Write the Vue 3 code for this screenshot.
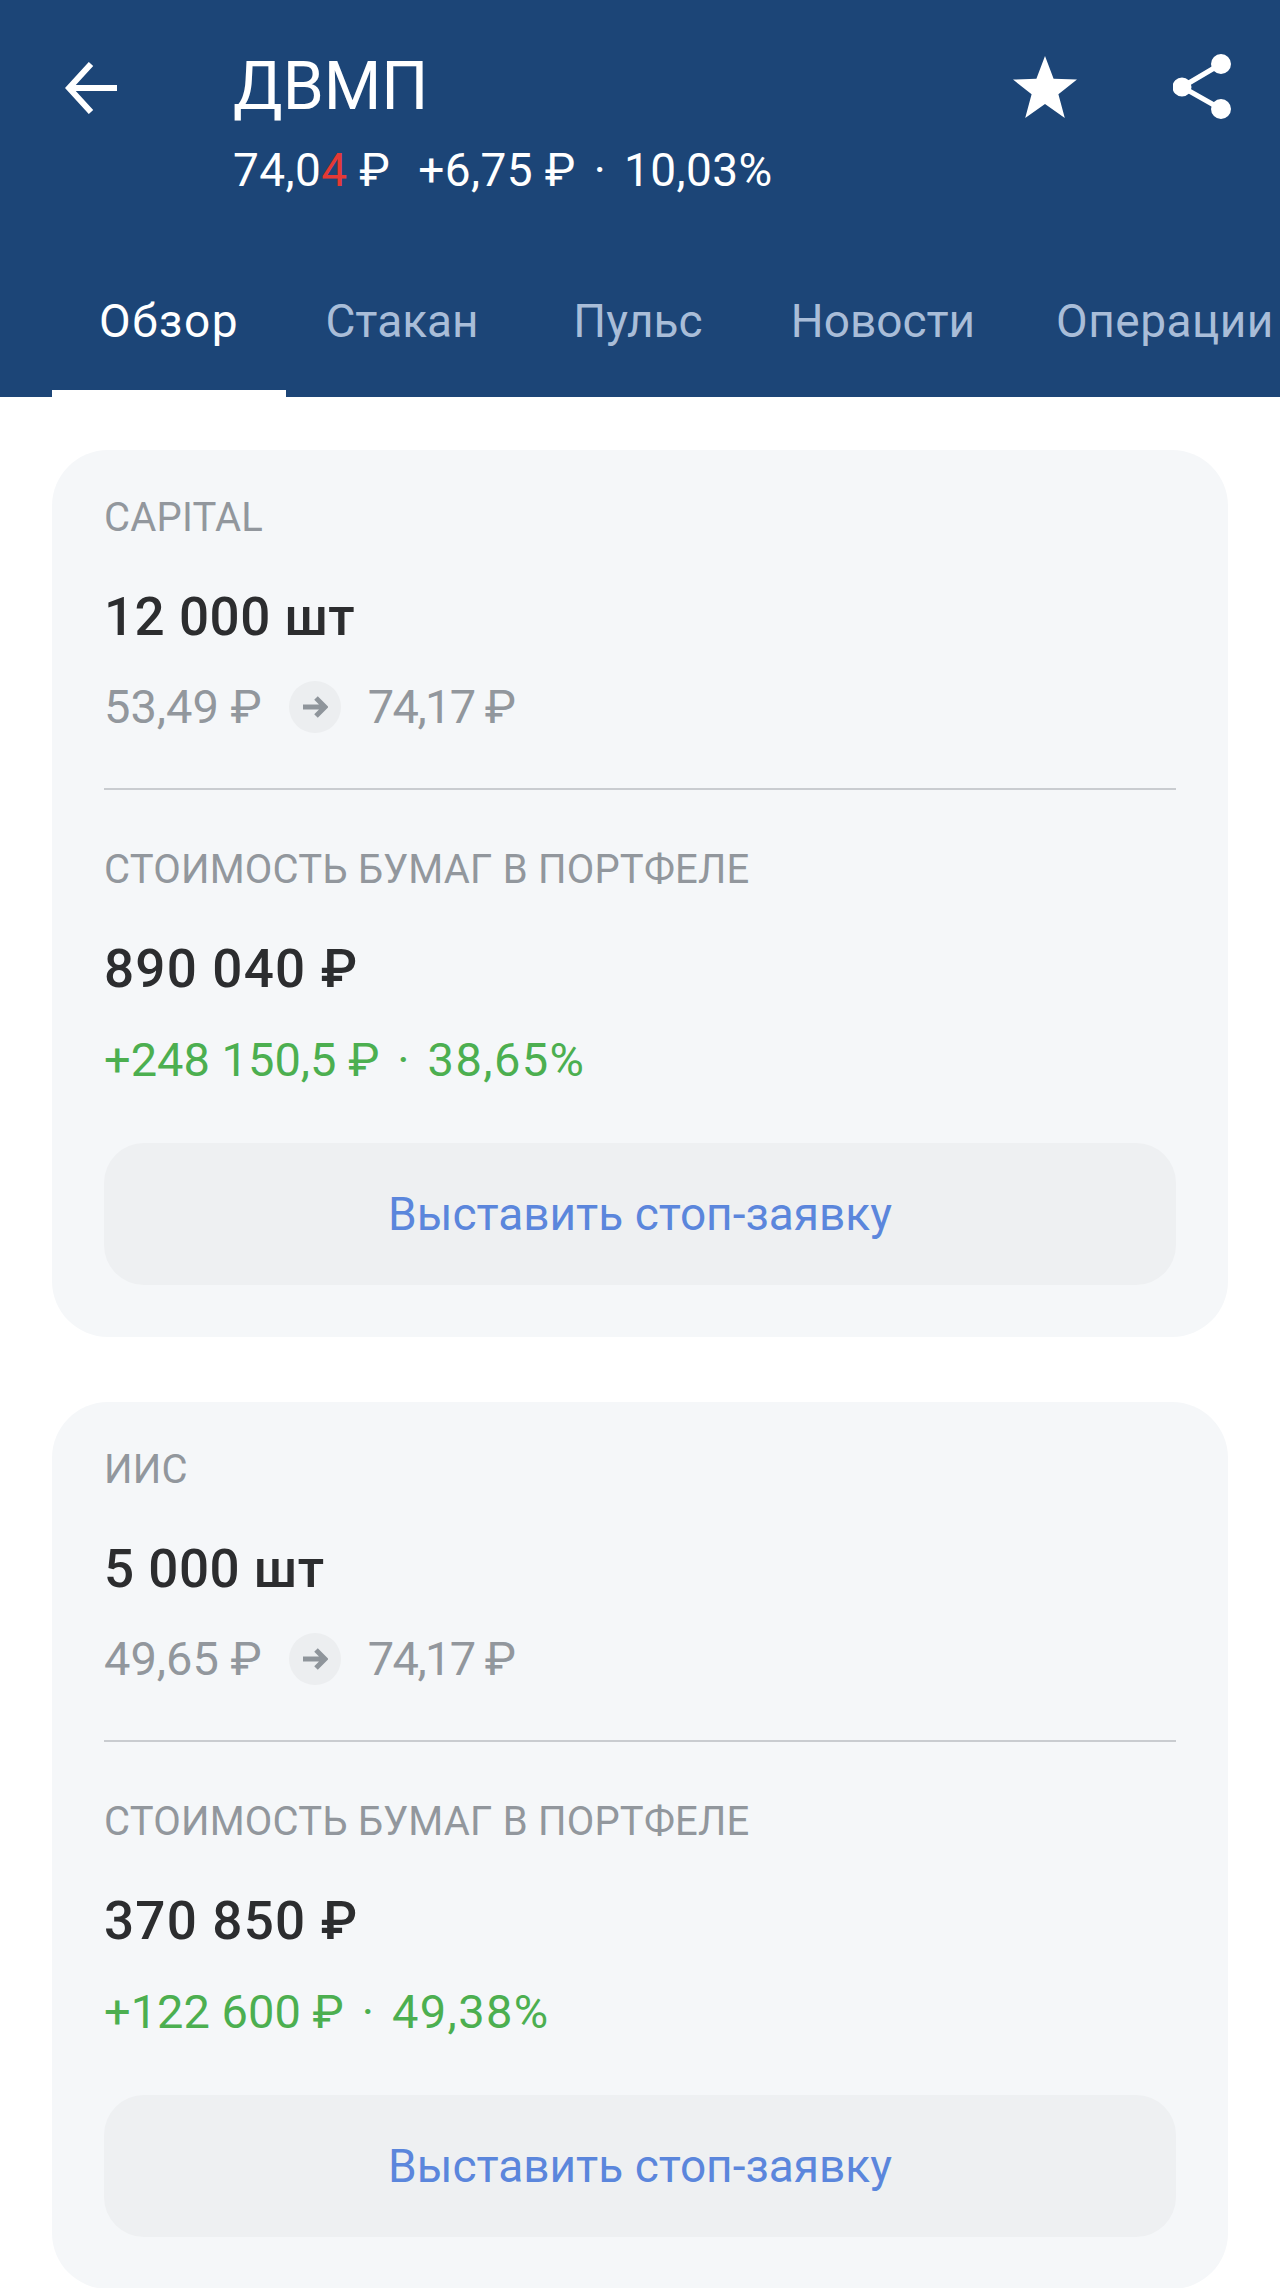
<script setup>
const tabs = ['Обзор', 'Стакан', 'Пульс', 'Новости', 'Операции'];
const positions = [
  { account: 'CAPITAL', qty: '12 000 шт', from: '53,49 ₽', to: '74,17 ₽', value: '890 040 ₽', gain: '+248 150,5 ₽', pct: '38,65%' },
  { account: 'ИИС', qty: '5 000 шт', from: '49,65 ₽', to: '74,17 ₽', value: '370 850 ₽', gain: '+122 600 ₽', pct: '49,38%' },
];
</script>

<template>
  <div class="page">
    <header class="header">
      <div class="top">
        <svg class="back" viewBox="0 0 52 52" width="52" height="52" fill="none" stroke="#fff" stroke-width="6">
          <path d="M26 2 4 26l22 24M4 26h48" />
        </svg>
        <div class="titles">
          <div class="title">ДВМП</div>
          <div class="quote">
            <span>74,0<i>4</i> ₽</span>
            <span class="change">+6,75 ₽</span>
            <span class="dot">·</span>
            <span>10,03%</span>
          </div>
        </div>
        <svg class="star" viewBox="0 0 64 62" width="64" height="62" fill="#fff">
          <path d="M32 0l8.6 22.8L64 23.6 45.400 38.200 51.800 62 32 48 12.200 62l6.400-23.800L0 23.600l23.400-.8z" />
        </svg>
        <svg class="share" viewBox="0 0 58 65" width="58" height="65" fill="#fff" stroke="#fff" stroke-width="5">
          <circle cx="48" cy="10" r="7.500" />
          <circle cx="9" cy="33" r="7" />
          <circle cx="48" cy="55" r="7.500" />
          <path d="M48 10 9 33l39 22" fill="none" />
        </svg>
      </div>
      <nav class="tabs">
        <div v-for="(tab, i) in tabs" :key="tab" class="tab" :class="{ active: i === 0 }">{{ tab }}</div>
      </nav>
    </header>

    <main class="list">
      <section v-for="p in positions" :key="p.account" class="card">
        <div class="label">{{ p.account }}</div>
        <div class="big">{{ p.qty }}</div>
        <div class="prices">
          <span>{{ p.from }}</span>
          <span class="arrow">
            <svg viewBox="0 0 26 22" width="26" height="22" fill="none" stroke="#8f959b" stroke-width="5">
              <path d="M14 2l9 9-9 9M23 11H1" />
            </svg>
          </span>
          <span class="to">{{ p.to }}</span>
        </div>
        <div class="divider"></div>
        <div class="label">СТОИМОСТЬ БУМАГ В ПОРТФЕЛЕ</div>
        <div class="big value">{{ p.value }}</div>
        <div class="gain">
          <span>{{ p.gain }}</span>
          <span class="dot">·</span>
          <span class="pct">{{ p.pct }}</span>
        </div>
        <button class="stop">Выставить стоп-заявку</button>
      </section>
    </main>
  </div>
</template>

<style>
html, body {
  margin: 0;
  background: #fff;
}
</style>

<style scoped>
.page {
  width: 1280px;
  height: 2288px;
  overflow: hidden;
  font-family: Roboto, "Noto Sans", sans-serif;
}

.header {
  height: 397px;
  background: #1c4577;
  color: #fff;
  display: flex;
  flex-direction: column;
}

.top {
  display: flex;
  align-items: flex-start;
  padding: 54px 49px 0 65px;
}

.back {
  margin-top: 8px;
  flex: none;
}

.titles {
  flex: 1;
  margin-left: 116px;
}

.title {
  font-size: 66px;
  line-height: 66px;
}

.quote {
  display: flex;
  font-size: 46px;
  line-height: 50px;
  letter-spacing: 0.4px;
  margin-top: 25px;
}

.quote i {
  font-style: normal;
  color: #e53935;
}

.change {
  margin-left: 28px;
}

.dot {
  margin: 0 18px;
}

.star {
  margin: 2px 96px 0 0;
  flex: none;
}

.tabs {
  display: flex;
  margin-top: auto;
  padding-left: 52px;
  white-space: nowrap;
}

.tab {
  flex: none;
  width: 240px;
  padding-bottom: 39px;
  font-size: 46px;
  line-height: 60px;
  text-align: center;
  color: #a9bdd8;
  border-bottom: 7px solid transparent;
}

.tab:nth-child(1) {
  width: 234px;
  letter-spacing: 1.500px;
}

.tab:nth-child(2) {
  width: 232px;
}

.tab:nth-child(4) {
  width: 250px;
}

.tab:nth-child(5) {
  width: 314px;
  letter-spacing: 0.500px;
}

.tab.active {
  color: #fff;
  border-bottom-color: #fff;
}

.list {
  display: flex;
  flex-direction: column;
  gap: 65px;
  padding: 53px 52px 0;
}

.card {
  background: #f5f7f9;
  border-radius: 56px;
  padding: 45px 52px 52px;
  height: 887px;
  box-sizing: border-box;
}

.label {
  font-size: 40px;
  line-height: 46px;
  letter-spacing: 0.2px;
  color: #92979d;
}

.big {
  font-size: 53px;
  line-height: 60px;
  letter-spacing: 0.5px;
  font-weight: 500;
  color: #2c2d2f;
  margin-top: 46px;
}

.value {
  letter-spacing: 1.200px;
}

.prices {
  display: flex;
  align-items: center;
  gap: 27px;
  font-size: 47px;
  line-height: 60px;
  color: #92979d;
  margin-top: 30px;
}

.to {
  letter-spacing: -1.600px;
}

.arrow {
  width: 52px;
  height: 52px;
  border-radius: 50%;
  background: #eceef0;
  display: flex;
  align-items: center;
  justify-content: center;
}

.divider {
  height: 2px;
  background: #c9ccd0;
  margin: 51px 0 57px;
}

.gain {
  display: flex;
  font-size: 47px;
  line-height: 60px;
  color: #4caf50;
  margin-top: 31px;
}

.gain .dot {
  margin: 0 18px;
}

.pct {
  letter-spacing: 1.400px;
}

.stop {
  display: block;
  width: 100%;
  height: 142px;
  margin-top: 53px;
  border: 0;
  border-radius: 40px;
  background: #eef0f2;
  font-family: inherit;
  font-size: 46px;
  color: #5b86dc;
}
</style>
